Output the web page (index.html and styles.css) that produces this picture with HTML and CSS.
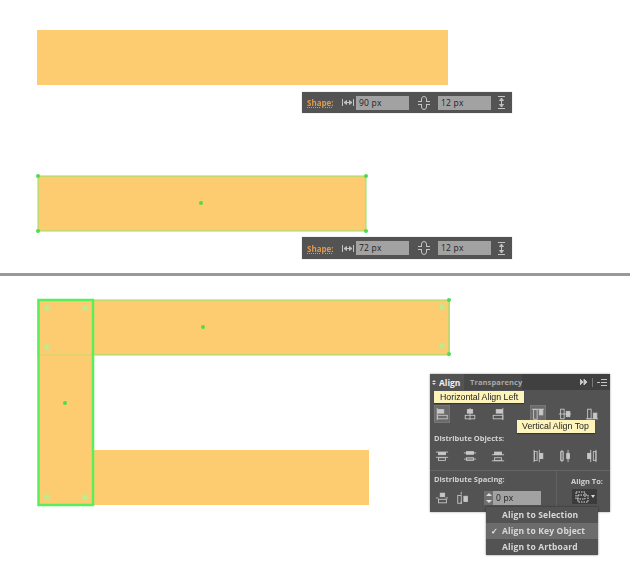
FILE: index.html
```html
<!DOCTYPE html>
<html lang="en">
<head>
  <meta charset="UTF-8" />
  <title>Align shapes</title>
  <link rel="stylesheet" href="styles.css">
</head>
<body>
  <svg class="sprite" width="0" height="0">
    <symbol id="al-left" viewBox="0 0 16 16"><path d="M2.5 1v14"/><rect x="3" y="3" width="7" height="4" class="solid"/><rect x="3" y="9.5" width="11" height="4"/></symbol>
    <symbol id="al-center" viewBox="0 0 16 16"><path d="M8 1v14"/><rect x="5" y="3" width="6" height="4" class="solid"/><rect x="2.5" y="9.5" width="11" height="4"/></symbol>
    <symbol id="al-right" viewBox="0 0 16 16"><path d="M13.5 1v14"/><rect x="6" y="3" width="7" height="4" class="solid"/><rect x="2.5" y="9.5" width="11" height="4"/></symbol>
    <symbol id="va-top" viewBox="0 0 16 16"><path d="M1 2.5h14"/><rect x="3" y="3" width="4" height="11"/><rect x="9.5" y="3" width="4" height="6" class="solid"/></symbol>
    <symbol id="va-mid" viewBox="0 0 16 16"><path d="M1 8h14"/><rect x="3" y="2.5" width="4" height="11" class="back"/><rect x="9.5" y="5" width="4" height="6" class="solid"/></symbol>
    <symbol id="va-bot" viewBox="0 0 16 16"><path d="M1 13.5h14"/><rect x="3" y="2.5" width="4" height="11"/><rect x="9.5" y="7" width="4" height="6" class="solid"/></symbol>
    <symbol id="dh-top" viewBox="0 0 16 16"><path d="M1 3.5h14M1 9.5h14"/><rect x="4" y="4" width="8" height="2.5" class="solid"/><rect x="4" y="10" width="8" height="3"/></symbol>
    <symbol id="dh-mid" viewBox="0 0 16 16"><path d="M1 4.5h14M1 11.5h14"/><rect x="4" y="3" width="8" height="3" class="solid"/><rect x="4" y="10" width="8" height="3" class="back"/></symbol>
    <symbol id="dh-bot" viewBox="0 0 16 16"><path d="M1 6.5h14M1 13.5h14"/><rect x="4" y="3.5" width="8" height="3" class="solid"/><rect x="4" y="10" width="8" height="3"/></symbol>
    <symbol id="dv-left" viewBox="0 0 16 16"><path d="M3.5 1v14M9.5 1v14"/><rect x="4" y="3" width="3" height="10"/><rect x="10" y="5" width="3.5" height="6" class="solid"/></symbol>
    <symbol id="dv-mid" viewBox="0 0 16 16"><path d="M4.5 1v14M11.5 1v14"/><rect x="3" y="3" width="3" height="10" class="back"/><rect x="10" y="5" width="3" height="6" class="solid"/></symbol>
    <symbol id="dv-right" viewBox="0 0 16 16"><path d="M6.5 1v14M12.5 1v14"/><rect x="3" y="5" width="3.5" height="6" class="solid"/><rect x="9.5" y="3" width="3" height="10"/></symbol>
    <symbol id="sp-v" viewBox="0 0 16 16"><path d="M1 8h3M12 8h3"/><rect x="6" y="2.5" width="5" height="4" class="solid"/><rect x="4" y="9.5" width="9" height="4"/></symbol>
    <symbol id="sp-h" viewBox="0 0 16 16"><path d="M6 1v3M6 12v3"/><rect x="2" y="5" width="4" height="9"/><rect x="9" y="6" width="4" height="6" class="solid"/></symbol>
  </svg>

  <section class="stage stage-top">
    <svg class="artboard" width="630" height="273">
      <rect class="fill" x="37" y="30" width="411" height="55"/>
      <rect class="fill" x="38" y="176" width="328" height="55"/>
      <rect class="edge" x="38" y="176" width="328" height="55"/>
      <circle class="node" cx="38" cy="176" r="2"/>
      <circle class="node" cx="366" cy="176" r="2"/>
      <circle class="node" cx="38" cy="231" r="2"/>
      <circle class="node" cx="366" cy="231" r="2"/>
      <circle class="node" cx="201" cy="203" r="2"/>
    </svg>

    <div class="shape-bar bar-one">
      <span class="shape-label">Shape:</span>
      <span class="bar-icon"><svg width="12" height="7" viewBox="0 0 12 7"><path d="M.5 0v7M11.5 0v7M2 3.500h8M2 3.500l2.500-2v4zM10 3.500L7.500 1.500v4z"/></svg></span>
      <span class="field">90 px</span>
      <span class="link-icon"><svg width="14" height="14" viewBox="0 0 14 14"><path d="M4.500 5V3a2.500 2.500 0 0 1 5 0v2M4.500 9v2a2.500 2.500 0 0 0 5 0V9M1 5.500h4M9 5.500h4M1 8.500h4M9 8.500h4"/></svg></span>
      <span class="field">12 px</span>
      <span class="bar-icon end"><svg width="7" height="13" viewBox="0 0 7 13"><path d="M0 .5h7M0 12.500h7M3.500 2v9M3.500 2L1.500 4.500h4zM3.500 11L1.500 8.500h4z"/></svg></span>
    </div>

    <div class="shape-bar bar-two">
      <span class="shape-label">Shape:</span>
      <span class="bar-icon"><svg width="12" height="7" viewBox="0 0 12 7"><path d="M.5 0v7M11.5 0v7M2 3.500h8M2 3.500l2.500-2v4zM10 3.500L7.500 1.500v4z"/></svg></span>
      <span class="field">72 px</span>
      <span class="link-icon"><svg width="14" height="14" viewBox="0 0 14 14"><path d="M4.500 5V3a2.500 2.500 0 0 1 5 0v2M4.500 9v2a2.500 2.500 0 0 0 5 0V9M1 5.500h4M9 5.500h4M1 8.500h4M9 8.500h4"/></svg></span>
      <span class="field">12 px</span>
      <span class="bar-icon end"><svg width="7" height="13" viewBox="0 0 7 13"><path d="M0 .5h7M0 12.500h7M3.500 2v9M3.500 2L1.500 4.500h4zM3.500 11L1.500 8.500h4z"/></svg></span>
    </div>
  </section>

  <hr class="divider" />

  <section class="stage stage-bottom">
    <svg class="artboard" width="630" height="294">
      <rect class="fill" x="38" y="24" width="412" height="55"/>
      <rect class="fill" x="93" y="174" width="276" height="55"/>
      <rect class="edge" x="38" y="24" width="411" height="55"/>
      <circle class="node" cx="449" cy="24" r="2"/>
      <circle class="node" cx="449" cy="78" r="2"/>
      <circle class="node" cx="203" cy="51" r="2"/>
      <circle class="widget" cx="442" cy="31" r="2.500"/>
      <circle class="widget" cx="442" cy="70" r="2.500"/>
      <rect class="fill" x="38" y="24" width="55" height="205"/>
      <path class="edge faint" d="M38 79h55"/>
      <rect class="key" x="38.500" y="24" width="54.500" height="205"/>
      <circle class="node" cx="65" cy="127" r="2"/>
      <circle class="widget" cx="47" cy="32" r="2.500"/>
      <circle class="widget" cx="85" cy="32" r="2.500"/>
      <circle class="widget" cx="47" cy="71" r="2.500"/>
      <circle class="widget" cx="47" cy="221" r="2.500"/>
      <circle class="widget" cx="85" cy="221" r="2.500"/>
    </svg>

    <div class="align-panel">
      <div class="panel-tabs">
        <span class="tab tab-active"><span class="updown"><i class="arrow-up small"></i><i class="arrow-down small"></i></span>Align</span>
        <span class="tab tab-other">Transparency</span>
        <span class="tab-tools">
          <svg width="8" height="6" viewBox="0 0 8 6"><path class="solid" d="M0 0l3 3-3 3zM4 0l3 3-3 3z"/></svg>
          <i class="tab-sep"></i>
          <svg width="10" height="7" viewBox="0 0 10 7"><path d="M0 3.500h3M4 .5h6M4 3.500h6M4 6.500h6"/></svg>
        </span>
      </div>

      <div class="icon-row row-align">
        <span class="icon-group">
          <span class="icon-btn is-on"><svg><use href="#al-left"/></svg></span>
          <span class="icon-btn"><svg><use href="#al-center"/></svg></span>
          <span class="icon-btn"><svg><use href="#al-right"/></svg></span>
        </span>
        <span class="icon-group">
          <span class="icon-btn is-on"><svg><use href="#va-top"/></svg></span>
          <span class="icon-btn"><svg><use href="#va-mid"/></svg></span>
          <span class="icon-btn"><svg><use href="#va-bot"/></svg></span>
        </span>
      </div>

      <div class="panel-title">Distribute Objects:</div>
      <div class="icon-row row-dist">
        <span class="icon-group">
          <span class="icon-btn"><svg><use href="#dh-top"/></svg></span>
          <span class="icon-btn"><svg><use href="#dh-mid"/></svg></span>
          <span class="icon-btn"><svg><use href="#dh-bot"/></svg></span>
        </span>
        <span class="icon-group">
          <span class="icon-btn"><svg><use href="#dv-left"/></svg></span>
          <span class="icon-btn"><svg><use href="#dv-mid"/></svg></span>
          <span class="icon-btn"><svg><use href="#dv-right"/></svg></span>
        </span>
      </div>

      <div class="panel-foot">
        <div class="foot-left">
          <div class="panel-title">Distribute Spacing:</div>
          <div class="spacing-row">
            <span class="icon-btn"><svg><use href="#sp-v"/></svg></span>
            <span class="icon-btn"><svg><use href="#sp-h"/></svg></span>
            <span class="stepper"><i class="arrow-up"></i><i class="arrow-down"></i></span>
            <span class="field field-spacing">0 px</span>
          </div>
        </div>
        <div class="foot-right">
          <div class="panel-title">Align To:</div>
          <span class="align-to">
            <svg width="14" height="12" viewBox="0 0 14 12"><path class="dashed" d="M1 1h9v7H1z"/><path d="M3 4h10v7H3z" class="dashed"/></svg>
            <i class="caret"></i>
          </span>
        </div>
      </div>

      <div class="tooltip tip-left">Horizontal Align Left</div>
      <div class="tooltip tip-top">Vertical Align Top</div>
    </div>

    <ul class="align-menu">
      <li>Align to Selection</li>
      <li class="is-checked">Align to Key Object</li>
      <li>Align to Artboard</li>
    </ul>
  </section>
</body>
</html>
```
FILE: styles.css
```css
:root {
  --orange: #fecc70;
  --green: #6be85a;
  --panel: #535353;
  --text: #d6d6d6;
}
* { box-sizing: border-box; margin: 0; padding: 0; }
body { background: #fff; font-family: "Open Sans", sans-serif; width: 630px; height: 570px; overflow: hidden; }
.sprite { position: absolute; }

.stage { position: relative; }
.stage-top { height: 273px; }
.stage-bottom { height: 294px; }
.artboard { display: block; }
.divider { border: none; height: 3px; background: #999; }

.fill { fill: var(--orange); }
.edge { fill: none; stroke: #8ce46e; stroke-width: 1; }
.faint { stroke: #c4dc6e; }
.key { fill: none; stroke: #5aee5a; stroke-width: 2.5; }
.node { fill: #4fdc4f; }
.widget { fill: #bdee8e; stroke: #c6e68a; stroke-width: 1; }

/* control bars */
.shape-bar { position: absolute; left: 302px; width: 210px; display: flex; align-items: center; background: var(--panel); padding-left: 5px; font-size: 8.5px; box-shadow: 0 0 1px rgba(0,0,0,.3); filter: blur(.3px); }
.bar-one { top: 92px; height: 21px; }
.bar-two { top: 237px; height: 22px; }
.shape-label { width: 33px; font-size: 8px; color: #e29a45; font-weight: 700; text-decoration: underline dotted; }
.bar-icon { width: 16px; display: flex; justify-content: center; }
.bar-icon.end { width: 21px; }
.bar-icon svg, .link-icon svg, .tab-tools svg { fill: none; stroke: #c4c4c4; stroke-width: 1; }
.link-icon { width: 29px; display: flex; justify-content: center; }
.field { display: block; width: 53px; height: 14px; line-height: 14px; padding-left: 3px; background: #a2a2a2; color: #222; letter-spacing: .2px; }

/* align panel */
.align-panel { position: absolute; left: 430px; top: 98px; width: 180px; height: 138px; background: var(--panel); color: var(--text); font-size: 7.5px; font-weight: 700; box-shadow: 0 0 2px rgba(0,0,0,.4); filter: blur(.3px); }
.panel-tabs { display: flex; align-items: center; height: 16px; background: #404040; }
.tab { display: flex; align-items: center; height: 16px; color: #a8a8a8; letter-spacing: .1px; }
.tab-active { width: 34px; padding-left: 2px; background: var(--panel); color: #f0f0f0; font-size: 8.500px; letter-spacing: 0; }
.tab-other { width: 58px; padding-left: 6px; background: #494949; }
.updown { display: flex; flex-direction: column; gap: 1px; margin-right: 3px; }
.tab-tools { margin-left: auto; display: flex; align-items: center; gap: 4px; padding-right: 3px; }
.tab-sep { width: 1px; height: 9px; background: #777; }
.solid { fill: #c8c8c8; }

.icon-row { display: flex; justify-content: space-between; padding: 0 11px 0 5px; }
.row-align { margin-top: 16px; height: 16px; }
.row-dist { margin-top: 4px; height: 16px; }
.icon-group { display: flex; gap: 14px; }
.icon-group:last-child { gap: 13px; }
.icon-btn { display: block; width: 14px; height: 16px; }
.icon-btn.is-on { background: #6b6b6b; box-shadow: 0 0 0 1px #777; }
.icon-btn svg { display: block; width: 14px; height: 16px; fill: none; stroke: #c8c8c8; stroke-width: 1; }
.icon-btn .back { fill: var(--panel); }
.panel-title { padding-left: 4px; line-height: 12px; color: #d2d2d2; }
.row-align + .panel-title { margin-top: 10px; }

.panel-foot { display: flex; margin-top: 6px; height: 41px; border-top: 1px solid #666; }
.foot-left { width: 127px; padding-top: 2px; border-right: 1px solid #606060; }
.foot-right { padding-top: 4px; }
.foot-right .panel-title { padding-left: 14px; white-space: nowrap; }
.spacing-row { display: flex; align-items: center; gap: 7px; padding: 5px 0 0 5px; }
.stepper { display: flex; flex-direction: column; align-items: center; justify-content: space-around; width: 9px; height: 14px; margin-left: 7px; margin-right: -7px; background: #6f6f6f; }
.arrow-up { border: 3px solid transparent; border-top: none; border-bottom: 3px solid #ddd; }
.arrow-down { border: 3px solid transparent; border-bottom: none; border-top: 3px solid #ddd; }
.small { border-width: 2px; }
.arrow-up.small { border-top: none; }
.arrow-down.small { border-bottom: none; }
.field-spacing { width: 48px; font-size: 8.5px; font-weight: 400; }
.align-to { display: flex; align-items: center; gap: 2px; width: 25px; height: 15px; margin: 2px 0 0 15px; padding-left: 3px; background: #3b3b3b; }
.align-to svg { fill: none; stroke: #e0e0e0; }
.dashed { stroke-dasharray: 1.500 1; }
.caret { border: 2.500px solid transparent; border-bottom: none; border-top: 3px solid #ddd; }

.tooltip { position: absolute; background: #fdf4bb; color: #1c1c1c; font-family: "Liberation Sans", sans-serif; font-weight: 400; font-size: 8.8px; white-space: nowrap; box-shadow: 0 1px 1px rgba(0,0,0,.35); }
.tip-left { left: 4px; top: 17px; width: 90px; height: 12px; line-height: 12px; padding-left: 6px; }
.tip-top { left: 87px; top: 46px; width: 78px; height: 13px; line-height: 13px; padding-left: 5px; }

/* dropdown */
.align-menu { position: absolute; left: 486px; top: 231px; width: 112px; height: 48px; list-style: none; background: var(--panel); color: #d8d8d8; font-size: 8.500px; font-weight: 700; letter-spacing: .15px; box-shadow: 0 0 2px rgba(0,0,0,.5); filter: blur(.3px); }
.align-menu li { position: relative; height: 16px; line-height: 16px; padding-left: 16px; }
.align-menu .is-checked { background: #6c6c6c; }
.is-checked::before { content: "\2713"; position: absolute; left: 5px; font-size: 8px; color: #eee; }
```
